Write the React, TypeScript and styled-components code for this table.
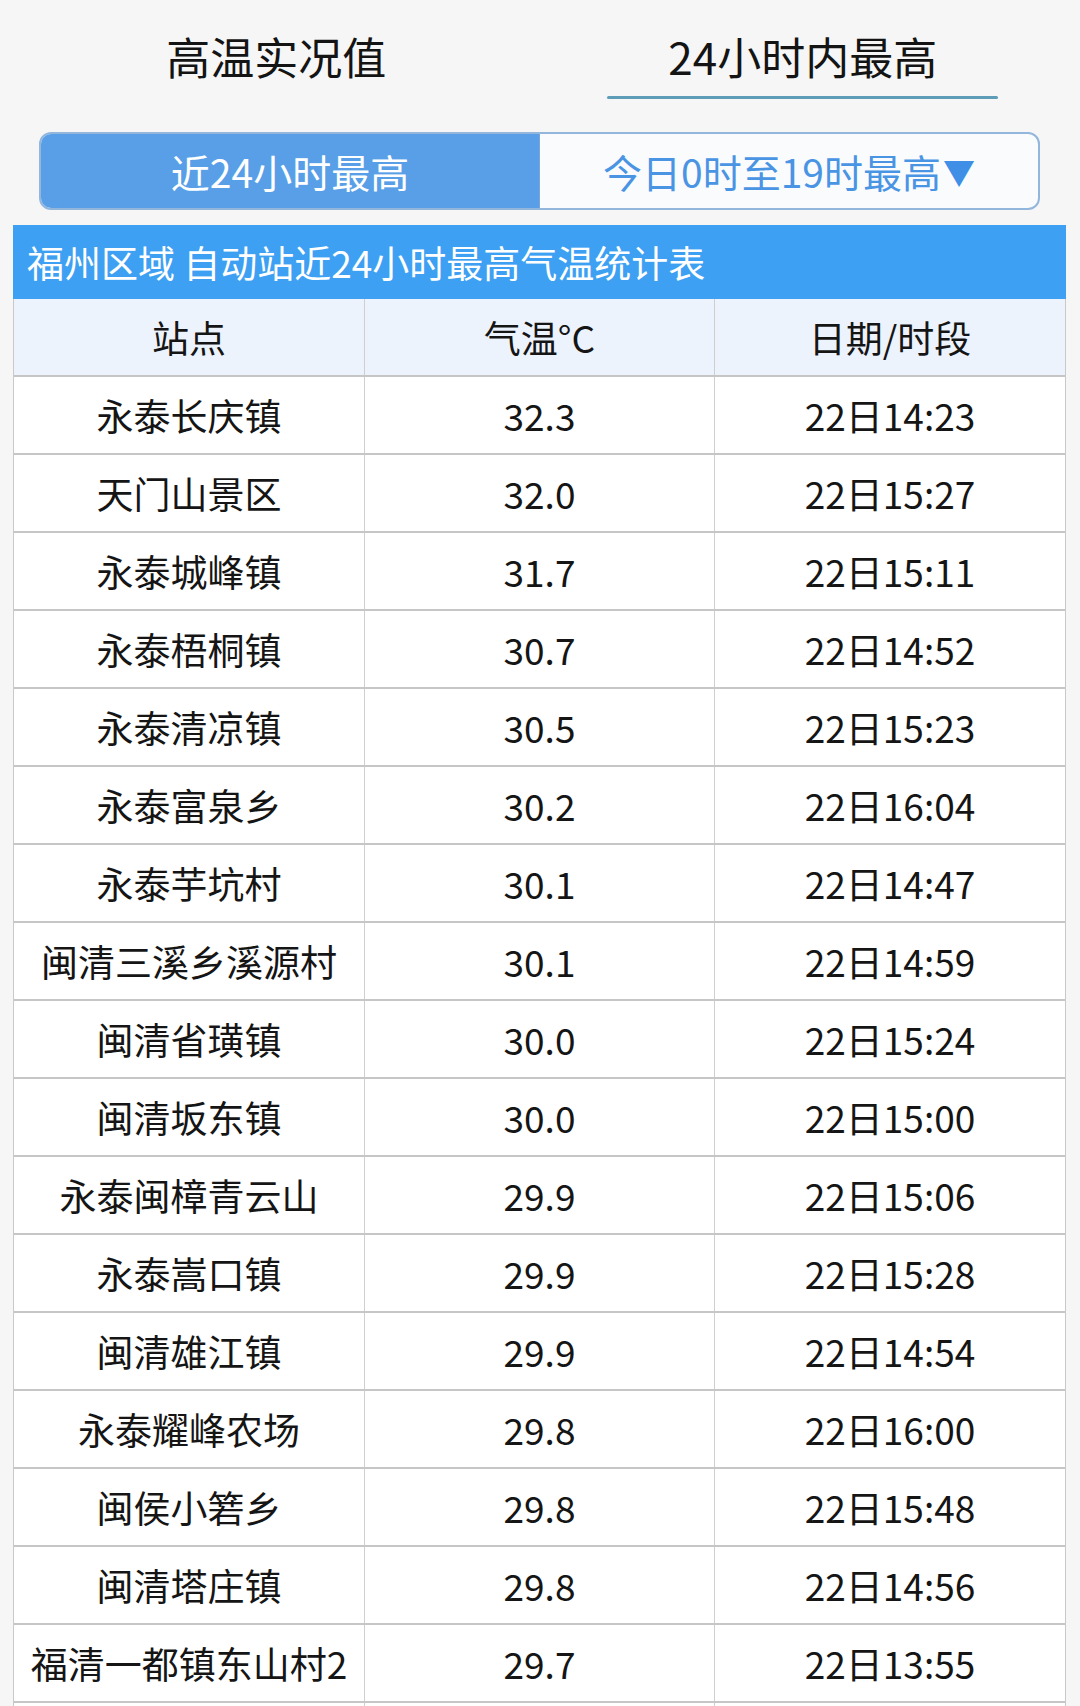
import React from "react";
import styled, { createGlobalStyle } from "styled-components";

const GlobalStyle = createGlobalStyle`
  html, body {
    margin: 0;
    padding: 0;
    background: #f6f6f6;
  }
  body {
    font-family: "Noto Sans CJK SC", "Noto Sans", sans-serif;
    color: #111;
  }
`;

const Page = styled.div`
  width: 1053px;
  margin-left: 13px;
  display: flex;
  flex-direction: column;
`;

const TabBar = styled.div`
  display: grid;
  grid-template-columns: 1fr 1fr;
`;

const Tab = styled.div`
  display: flex;
  flex-direction: column;
  align-items: center;
  padding-top: 29px;
`;

const TabLabel = styled.div`
  font-size: 44px;
  line-height: 54px;
  color: #141414;
`;

const TabLine = styled.div<{ $active?: boolean }>`
  margin-top: 13px;
  width: 391px;
  height: 3px;
  border-radius: 2px;
  background: ${(p) => (p.$active ? "#5d9db8" : "transparent")};
`;

const Segment = styled.div`
  margin: 33px 26px 0 26px;
  height: 78px;
  box-sizing: border-box;
  border: 2px solid #93b6dc;
  border-radius: 12px;
  overflow: hidden;
  display: grid;
  grid-template-columns: 499px 1fr;
  background: #fafbfd;
`;

const SegItem = styled.div<{ $active?: boolean }>`
  display: flex;
  align-items: center;
  justify-content: center;
  font-size: 39px;
  line-height: 1;
  background: ${(p) => (p.$active ? "#589fe7" : "transparent")};
  color: ${(p) => (p.$active ? "#ffffff" : "#4a94e4")};
  border-right: ${(p) => (p.$active ? "1px solid #7aa6d6" : "none")};
`;

const Caret = styled.span`
  font-size: 32px;
  margin-left: 2px;
  color: #3f8fe6;
`;

const Table = styled.div`
  margin-top: 15px;
  display: flex;
  flex-direction: column;
  border-left: 1px solid #c9c9c9;
  border-right: 1px solid #c9c9c9;
`;

const TitleBar = styled.div`
  height: 74px;
  background: #3ea0f2;
  color: #ffffff;
  font-size: 37px;
  display: flex;
  align-items: center;
  padding-left: 14px;
  margin: 0 -1px;
  white-space: pre;
`;

const Row = styled.div<{ $head?: boolean }>`
  display: grid;
  grid-template-columns: 350px 350px 1fr;
  height: 78px;
  box-sizing: border-box;
  border-bottom: 2px solid #c6c6c6;
  background: ${(p) => (p.$head ? "#edf3fd" : "#ffffff")};
`;

const Cell = styled.div`
  display: flex;
  align-items: center;
  justify-content: center;
  font-size: 37px;
  color: #151515;
  white-space: nowrap;
  & + & {
    border-left: 1.5px solid #cfcfcf;
  }
`;

const rows: [string, string, string][] = [
  ["永泰长庆镇", "32.3", "22日14:23"],
  ["天门山景区", "32.0", "22日15:27"],
  ["永泰城峰镇", "31.7", "22日15:11"],
  ["永泰梧桐镇", "30.7", "22日14:52"],
  ["永泰清凉镇", "30.5", "22日15:23"],
  ["永泰富泉乡", "30.2", "22日16:04"],
  ["永泰芋坑村", "30.1", "22日14:47"],
  ["闽清三溪乡溪源村", "30.1", "22日14:59"],
  ["闽清省璜镇", "30.0", "22日15:24"],
  ["闽清坂东镇", "30.0", "22日15:00"],
  ["永泰闽樟青云山", "29.9", "22日15:06"],
  ["永泰嵩口镇", "29.9", "22日15:28"],
  ["闽清雄江镇", "29.9", "22日14:54"],
  ["永泰耀峰农场", "29.8", "22日16:00"],
  ["闽侯小箬乡", "29.8", "22日15:48"],
  ["闽清塔庄镇", "29.8", "22日14:56"],
  ["福清一都镇东山村2", "29.7", "22日13:55"],
  ["", "", ""],
];

export default function App() {
  return (
    <>
      <GlobalStyle />
      <Page>
        <TabBar>
          <Tab>
            <TabLabel>高温实况值</TabLabel>
            <TabLine />
          </Tab>
          <Tab>
            <TabLabel>24小时内最高</TabLabel>
            <TabLine $active />
          </Tab>
        </TabBar>
        <Segment>
          <SegItem $active>近24小时最高</SegItem>
          <SegItem>
            今日0时至19时最高<Caret>▼</Caret>
          </SegItem>
        </Segment>
        <Table>
          <TitleBar>福州区域 自动站近24小时最高气温统计表</TitleBar>
          <Row $head>
            <Cell>站点</Cell>
            <Cell>气温°C</Cell>
            <Cell>日期/时段</Cell>
          </Row>
          {rows.map((r, i) => (
            <Row key={i}>
              <Cell>{r[0]}</Cell>
              <Cell>{r[1]}</Cell>
              <Cell>{r[2]}</Cell>
            </Row>
          ))}
        </Table>
      </Page>
    </>
  );
}
